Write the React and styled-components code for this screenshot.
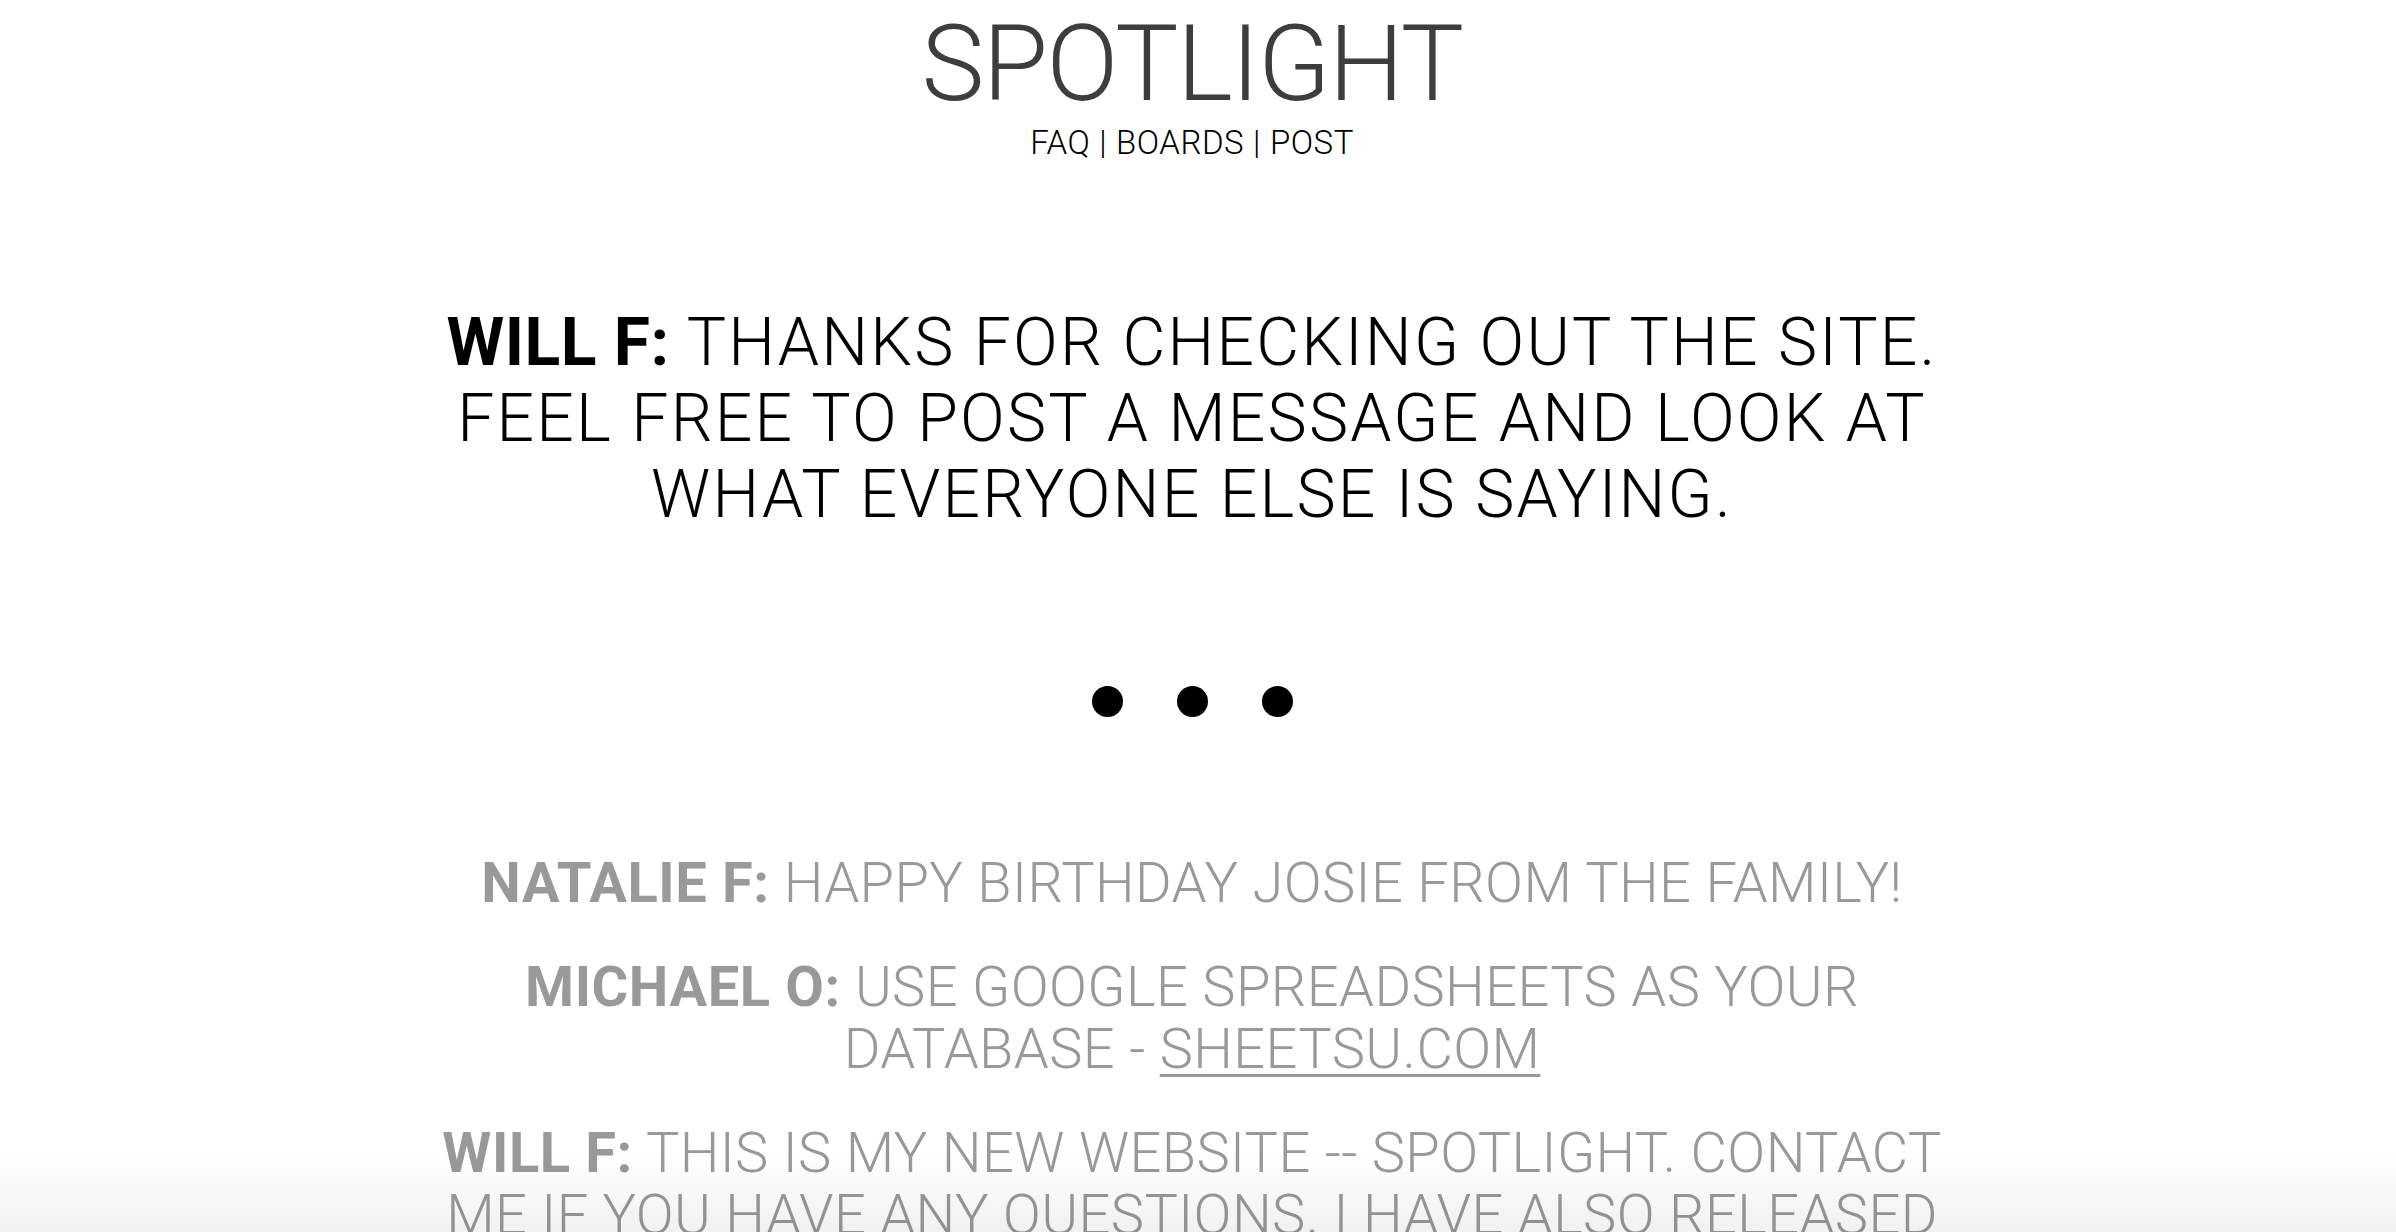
import React from 'react';
import styled, { createGlobalStyle } from 'styled-components';

const GlobalStyle = createGlobalStyle`
  html, body {
    margin: 0;
    padding: 0;
    background: #fff;
    font-family: Roboto, 'Liberation Sans', Arial, sans-serif;
    font-weight: 300;
  }
`;

const Page = styled.div`
  text-align: center;
  padding: 0 12px 120px 0;
`;

const Header = styled.header`
  padding-top: 11px;
`;

const Title = styled.h1`
  margin: 0;
  font-size: 106px;
  line-height: 1;
  font-weight: 300;
  color: #3d3d3d;
  letter-spacing: -1.6px;
`;

const Nav = styled.nav`
  margin-top: 7px;
  font-size: 33px;
  line-height: 1.15;
  letter-spacing: 0.5px;
  color: #000;
  a {
    color: inherit;
    text-decoration: none;
  }
`;

const Sep = styled.span`
  margin: 0 9px;
`;

const Feature = styled.p`
  max-width: 1530px;
  margin: 143px auto 0;
  font-size: 66px;
  line-height: 76px;
  letter-spacing: 2.2px;
  color: #000;
  strong {
    font-weight: 700;
    letter-spacing: 0.5px;
  }
`;

const Dots = styled.div`
  display: flex;
  justify-content: center;
  gap: 54px;
  margin-top: 153px;
`;

const Dot = styled.span`
  width: 31px;
  height: 31px;
  border-radius: 50%;
  background: #000;
`;

const Messages = styled.div`
  max-width: 1510px;
  margin: 135px auto 0;
`;

const Message = styled.p`
  margin: 0 0 42px;
  font-size: 56px;
  line-height: 62px;
  letter-spacing: 0.4px;
  color: #999;
  strong {
    font-weight: 700;
    letter-spacing: 0.6px;
  }
  a {
    color: inherit;
    text-decoration: underline;
    text-decoration-thickness: 3px;
    text-underline-offset: 6px;
  }
`;

const Fade = styled.div`
  position: fixed;
  left: 0;
  right: 0;
  bottom: 0;
  height: 80px;
  pointer-events: none;
  background: linear-gradient(to bottom, rgba(0, 0, 0, 0), rgba(0, 0, 0, 0.055));
`;

const messages = [
  { name: 'NATALIE F:', text: 'HAPPY BIRTHDAY JOSIE FROM THE FAMILY!' },
  {
    name: 'MICHAEL O:',
    text: 'USE GOOGLE SPREADSHEETS AS YOUR DATABASE - ',
    link: 'SHEETSU.COM',
  },
  {
    name: 'WILL F:',
    text: 'THIS IS MY NEW WEBSITE -- SPOTLIGHT. CONTACT ME IF YOU HAVE ANY QUESTIONS. I HAVE ALSO RELEASED A FEW OTHER PROJECTS THAT YOU CAN FIND ON MY PROFILE.',
  },
  { name: 'JOSIE K:', text: 'THANK YOU ALL FOR THE BIRTHDAY WISHES!' },
];

const App = () => {
  return (
    <Page>
      <GlobalStyle />
      <Header>
        <Title>SPOTLIGHT</Title>
        <Nav>
          <a href="#faq">FAQ</a>
          <Sep>|</Sep>
          <a href="#boards">BOARDS</a>
          <Sep>|</Sep>
          <a href="#post">POST</a>
        </Nav>
      </Header>

      <Feature>
        <strong>WILL F:</strong> THANKS FOR CHECKING OUT THE SITE. FEEL FREE TO POST A MESSAGE AND LOOK AT WHAT EVERYONE ELSE IS SAYING.
      </Feature>

      <Dots>
        <Dot />
        <Dot />
        <Dot />
      </Dots>

      <Messages>
        {messages.map((m) => (
          <Message key={m.name + m.text}>
            <strong>{m.name}</strong> {m.text}
            {m.link && <a href="#sheetsu">{m.link}</a>}
          </Message>
        ))}
      </Messages>
      <Fade />
    </Page>
  );
};

export default App;
